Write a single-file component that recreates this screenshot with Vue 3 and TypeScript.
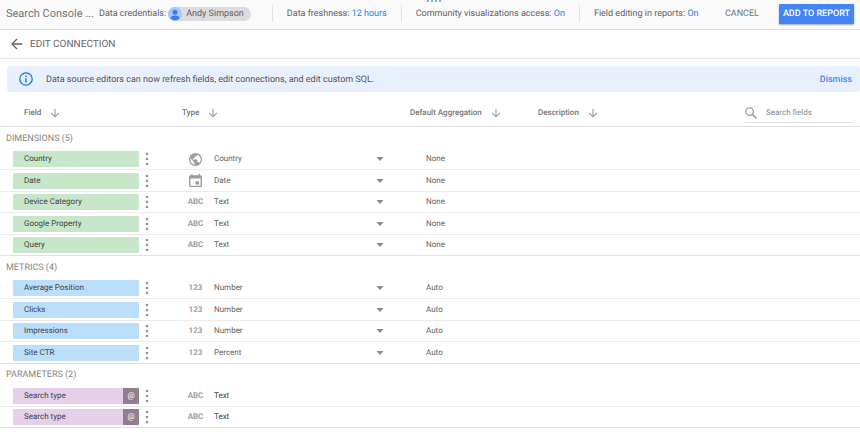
<script setup lang="ts">
import { ref } from 'vue'

type Kind = 'globe' | 'date' | 'ABC' | '123'

interface Field {
  name: string
  kind: Kind
  type: string
  aggregation?: string
}

interface Section {
  id: string
  title: string
  fields: Field[]
}

const sections: Section[] = [
  {
    id: 'dimensions',
    title: 'DIMENSIONS',
    fields: [
      { name: 'Country', kind: 'globe', type: 'Country', aggregation: 'None' },
      { name: 'Date', kind: 'date', type: 'Date', aggregation: 'None' },
      { name: 'Device Category', kind: 'ABC', type: 'Text', aggregation: 'None' },
      { name: 'Google Property', kind: 'ABC', type: 'Text', aggregation: 'None' },
      { name: 'Query', kind: 'ABC', type: 'Text', aggregation: 'None' },
    ],
  },
  {
    id: 'metrics',
    title: 'METRICS',
    fields: [
      { name: 'Average Position', kind: '123', type: 'Number', aggregation: 'Auto' },
      { name: 'Clicks', kind: '123', type: 'Number', aggregation: 'Auto' },
      { name: 'Impressions', kind: '123', type: 'Number', aggregation: 'Auto' },
      { name: 'Site CTR', kind: '123', type: 'Percent', aggregation: 'Auto' },
    ],
  },
  {
    id: 'parameters',
    title: 'PARAMETERS',
    fields: [
      { name: 'Search type', kind: 'ABC', type: 'Text' },
      { name: 'Search type', kind: 'ABC', type: 'Text' },
    ],
  },
]

const columns = ['Field', 'Type', 'Default Aggregation', 'Description']
const query = ref('')
</script>

<template>
  <div class="page">
    <header class="topbar">
      <span class="grip"><i></i><i></i><i></i><i></i></span>
      <h1 class="title">Search Console ...</h1>
      <div class="credentials">
        <span>Data credentials:</span>
        <button type="button" class="person">
          <svg class="avatar" viewBox="0 0 14 14" aria-hidden="true">
            <circle cx="7" cy="7" r="7" fill="#a6c8fb" />
            <circle cx="7" cy="5.2" r="2.5" fill="#3f7be8" />
            <path d="M2.4 11.2C2.8 9.3 4.9 8.6 7 8.6s4.2.7 4.6 2.6A6.4 6.4 0 0 1 7 13.2a6.4 6.4 0 0 1-4.6-2z" fill="#3f7be8" />
          </svg>
          <span>Andy Simpson</span>
        </button>
      </div>
      <div class="setting">Data freshness: <a href="#">12 hours</a></div>
      <div class="setting">Community visualizations access: <a href="#">On</a></div>
      <div class="setting">Field editing in reports: <a href="#">On</a></div>
      <div class="actions">
        <button type="button" class="cancel">CANCEL</button>
        <button type="button" class="add">ADD TO REPORT</button>
      </div>
    </header>

    <a href="#" class="edit">
      <svg viewBox="0 0 12 12" aria-hidden="true">
        <path d="M11.3 6H1.2M6 1L1 6l5 5" fill="none" stroke="#616161" stroke-width="1.3" />
      </svg>
      <span>EDIT CONNECTION</span>
    </a>

    <div class="notice">
      <svg viewBox="0 0 14 14" aria-hidden="true">
        <circle cx="7" cy="7" r="6.2" fill="none" stroke="#1a73e8" stroke-width="1.3" />
        <path d="M7 6.2v4.2M7 3.5v1.4" stroke="#1a73e8" stroke-width="1.4" />
      </svg>
      <p>Data source editors can now refresh fields, edit connections, and edit custom SQL.</p>
      <button type="button">Dismiss</button>
    </div>

    <table class="fields">
      <colgroup>
        <col class="c-field" />
        <col class="c-type" />
        <col class="c-agg" />
        <col />
        <col class="c-search" />
      </colgroup>
      <thead>
        <tr>
          <th v-for="(column, i) in columns" :key="column" scope="col" :class="{ first: i === 0 }">
            <button type="button" class="sort">
              <span>{{ column }}</span>
              <svg viewBox="0 0 10 10" aria-hidden="true">
                <path d="M5 .8v7.8M1.2 5L5 8.8 8.8 5" fill="none" stroke="#9e9e9e" stroke-width="1.1" />
              </svg>
            </button>
          </th>
          <td>
            <label class="search">
              <svg viewBox="0 0 12 12" aria-hidden="true">
                <circle cx="4.6" cy="4.6" r="3.8" fill="none" stroke="#9e9e9e" stroke-width="1.3" />
                <path d="M7.4 7.4l4 4" stroke="#9e9e9e" stroke-width="1.6" />
              </svg>
              <input v-model="query" type="text" placeholder="Search fields" aria-label="Search fields" />
            </label>
          </td>
        </tr>
      </thead>
      <tbody v-for="section in sections" :key="section.id" :class="section.id">
        <tr class="section">
          <th colspan="5" scope="rowgroup">{{ section.title }} ({{ section.fields.length }})</th>
        </tr>
        <tr v-for="(field, i) in section.fields" :key="i">
          <td>
            <div class="name">
              <span class="chip">
                <span>{{ field.name }}</span>
                <b v-if="section.id === 'parameters'">@</b>
              </span>
              <button type="button" class="more" :aria-label="`Options for ${field.name}`">
                <svg viewBox="0 0 4 14" aria-hidden="true" fill="#949494">
                  <circle cx="2" cy="2" r="1.3" />
                  <circle cx="2" cy="7" r="1.3" />
                  <circle cx="2" cy="12" r="1.3" />
                </svg>
              </button>
            </div>
          </td>
          <td>
            <div class="type">
              <svg v-if="field.kind === 'globe'" class="kind" viewBox="2 2 20 20" aria-hidden="true">
                <path
                  d="M12 2C6.48 2 2 6.48 2 12s4.48 10 10 10 10-4.48 10-10S17.52 2 12 2zm-1 17.93c-3.95-.49-7-3.85-7-7.93 0-.62.08-1.21.21-1.79L9 15v1c0 1.1.9 2 2 2v1.93zm6.9-2.54c-.26-.81-1-1.39-1.9-1.39h-1v-3c0-.55-.45-1-1-1H8v-2h2c.55 0 1-.45 1-1V7h2c1.1 0 2-.9 2-2v-.41c2.93 1.19 5 4.06 5 7.41 0 2.08-.8 3.97-2.1 5.39z"
                  fill="#9e9e9e"
                />
              </svg>
              <svg v-else-if="field.kind === 'date'" class="kind" viewBox="3 1 18 20" preserveAspectRatio="none" aria-hidden="true">
                <path
                  d="M17 12h-5v5h5v-5zM16 1v2H8V1H6v2H5c-1.11 0-1.99.9-1.99 2L3 19c0 1.1.89 2 2 2h14c1.1 0 2-.9 2-2V5c0-1.1-.9-2-2-2h-1V1h-2zm3 18H5V8h14v11z"
                  fill="#9e9e9e"
                />
              </svg>
              <span v-else class="kind">{{ field.kind }}</span>
              <span v-if="section.id === 'parameters'" class="plain">{{ field.type }}</span>
              <span v-else class="picker">
                <select :aria-label="`Type of ${field.name}`">
                  <option>{{ field.type }}</option>
                </select>
                <svg viewBox="0 0 8 4" aria-hidden="true"><path d="M.5 0h7L4 4z" fill="#8a8a8a" /></svg>
              </span>
            </div>
          </td>
          <td class="agg">{{ field.aggregation }}</td>
          <td></td>
          <td></td>
        </tr>
      </tbody>
    </table>
  </div>
</template>

<style>
body {
  background: #fff;
}
</style>

<style scoped>
.page {
  font-family: Roboto, 'Liberation Sans', sans-serif;
  font-size: 8px;
  line-height: 12px;
  color: #616161;
  text-rendering: geometricPrecision;
}
button,
input,
select {
  font: inherit;
  color: inherit;
  border: 0;
  padding: 0;
  background: none;
  text-rendering: inherit;
}
button {
  cursor: pointer;
}
a {
  text-decoration: none;
}
svg {
  display: block;
  flex: none;
}

.topbar {
  position: relative;
  display: flex;
  align-items: center;
  box-sizing: border-box;
  height: 30px;
  padding: 0 6px 2px;
  border-bottom: 1px solid #dedede;
  background: #fafafa;
  font-size: 9px;
  line-height: 14px;
  white-space: nowrap;
}
.grip {
  position: absolute;
  top: 0;
  left: 50%;
  display: flex;
  gap: 2px;
  margin-left: -3px;
}
.grip i {
  width: 2px;
  height: 2px;
  border-radius: 1px;
  background: #3b9bf0;
}
.title {
  margin: 0;
  width: 93px;
  font-size: 11px;
  font-weight: 400;
  color: #757575;
}
.credentials {
  display: flex;
  align-items: center;
  gap: 2px;
  margin-right: 21px;
}
.person {
  display: flex;
  align-items: center;
  gap: 4px;
  height: 14px;
  padding-right: 7px;
  border-radius: 7px;
  background: #dadce0;
}
.avatar {
  width: 14px;
  height: 14px;
}
.setting {
  padding: 2px 14px 1px;
  border-left: 1px solid #e4e4e4;
}
.setting a {
  color: #2a7de9;
}
.actions {
  display: flex;
  align-items: center;
  gap: 20px;
  margin-left: auto;
}
.cancel {
  color: #757575;
}
.add {
  height: 20px;
  padding: 1px 4px 0;
  border-radius: 1px;
  background: #4285f4;
  box-shadow: 0 1px 2px rgba(0, 0, 0, 0.35);
  color: #fff;
  font-weight: 500;
}
.credentials span,
.cancel {
  padding-top: 1px;
}

.edit {
  display: flex;
  align-items: center;
  gap: 7px;
  height: 28px;
  padding-left: 11px;
  border-bottom: 1px solid #e8e8e8;
  font-size: 10px;
  color: #666;
}
.edit span {
  padding-top: 1px;
}
.edit svg {
  width: 12px;
  height: 12px;
}

.notice {
  display: flex;
  align-items: center;
  height: 26px;
  margin: 7px 0 0 7px;
  padding: 0 8px 0 12px;
  border-radius: 4px;
  background: #e8f0fe;
  font-size: 9px;
  color: #555;
}
.notice svg {
  width: 14px;
  height: 14px;
  margin-right: 13px;
}
.notice p {
  flex: 1;
  margin: 0;
  padding-top: 1px;
}
.notice button {
  padding-top: 1px;
  color: #4285f4;
  font-weight: 500;
}

.fields {
  width: 100%;
  table-layout: fixed;
  border-spacing: 0;
}
.c-field {
  width: 182px;
}
.c-type {
  width: 228px;
}
.c-agg {
  width: 128px;
}
.c-search {
  width: 115px;
}
.fields th,
.fields td {
  box-sizing: border-box;
  padding: 0;
  text-align: left;
  vertical-align: middle;
  border-bottom: 1px solid #ebebeb;
}
thead th,
thead td {
  height: 35px;
}
.fields thead th,
.fields thead td {
  padding-top: 8px;
  border-color: #e0e0e0;
}
.fields thead .first {
  padding-left: 24px;
}
.sort {
  display: flex;
  align-items: center;
  gap: 9px;
  font-weight: 500;
  color: #757575;
}
.sort svg {
  width: 10px;
  height: 10px;
}
.search {
  display: flex;
  align-items: center;
  gap: 9px;
  height: 18px;
  margin-right: 8px;
  border-bottom: 1px solid #e0e0e0;
}
.search svg {
  width: 12px;
  height: 12px;
}
.search input {
  flex: 1;
  min-width: 0;
  outline: 0;
}
.search input::placeholder {
  color: #8a8a8a;
  opacity: 1;
}

tbody tr:nth-child(odd) > *,
.parameters tr:nth-child(even) > * {
  height: 22px;
}
tbody tr:nth-child(even) > *,
.parameters tr:nth-child(odd) > * {
  height: 21px;
}
.fields .section th {
  padding: 2px 0 0 6px;
  border-color: transparent;
  font-size: 9px;
  font-weight: 400;
  color: #858585;
}
.fields tbody tr:last-child td {
  border-color: #e0e0e0;
}
.name {
  display: flex;
  align-items: center;
  gap: 6px;
  padding-left: 13px;
}
.chip {
  display: flex;
  justify-content: space-between;
  width: 126px;
  overflow: hidden;
  border-radius: 1px;
  line-height: 16px;
  color: #424242;
  background: #c8e6c9;
}
.chip span {
  padding-left: 11px;
}
.metrics .chip {
  background: #bbdefb;
}
.parameters .chip {
  background: #e6cfe8;
}
.chip b {
  width: 16px;
  text-align: center;
  font-weight: 400;
  color: #fff;
  background: #8f7f91;
}
.more svg {
  width: 4px;
  height: 14px;
}
.type {
  display: flex;
  align-items: center;
  padding-left: 7px;
}
.kind {
  width: 13px;
  height: 13px;
  margin-right: 12px;
}
span.kind {
  display: flex;
  align-items: center;
  justify-content: center;
  font-weight: 700;
  color: #9e9e9e;
}
.plain {
  color: #424242;
}
.picker {
  display: flex;
  align-items: center;
  width: 170px;
}
.picker select {
  flex: 1;
  appearance: none;
  outline: 0;
}
.picker svg {
  width: 8px;
  height: 4px;
}
.fields .agg {
  padding-left: 16px;
}
</style>
